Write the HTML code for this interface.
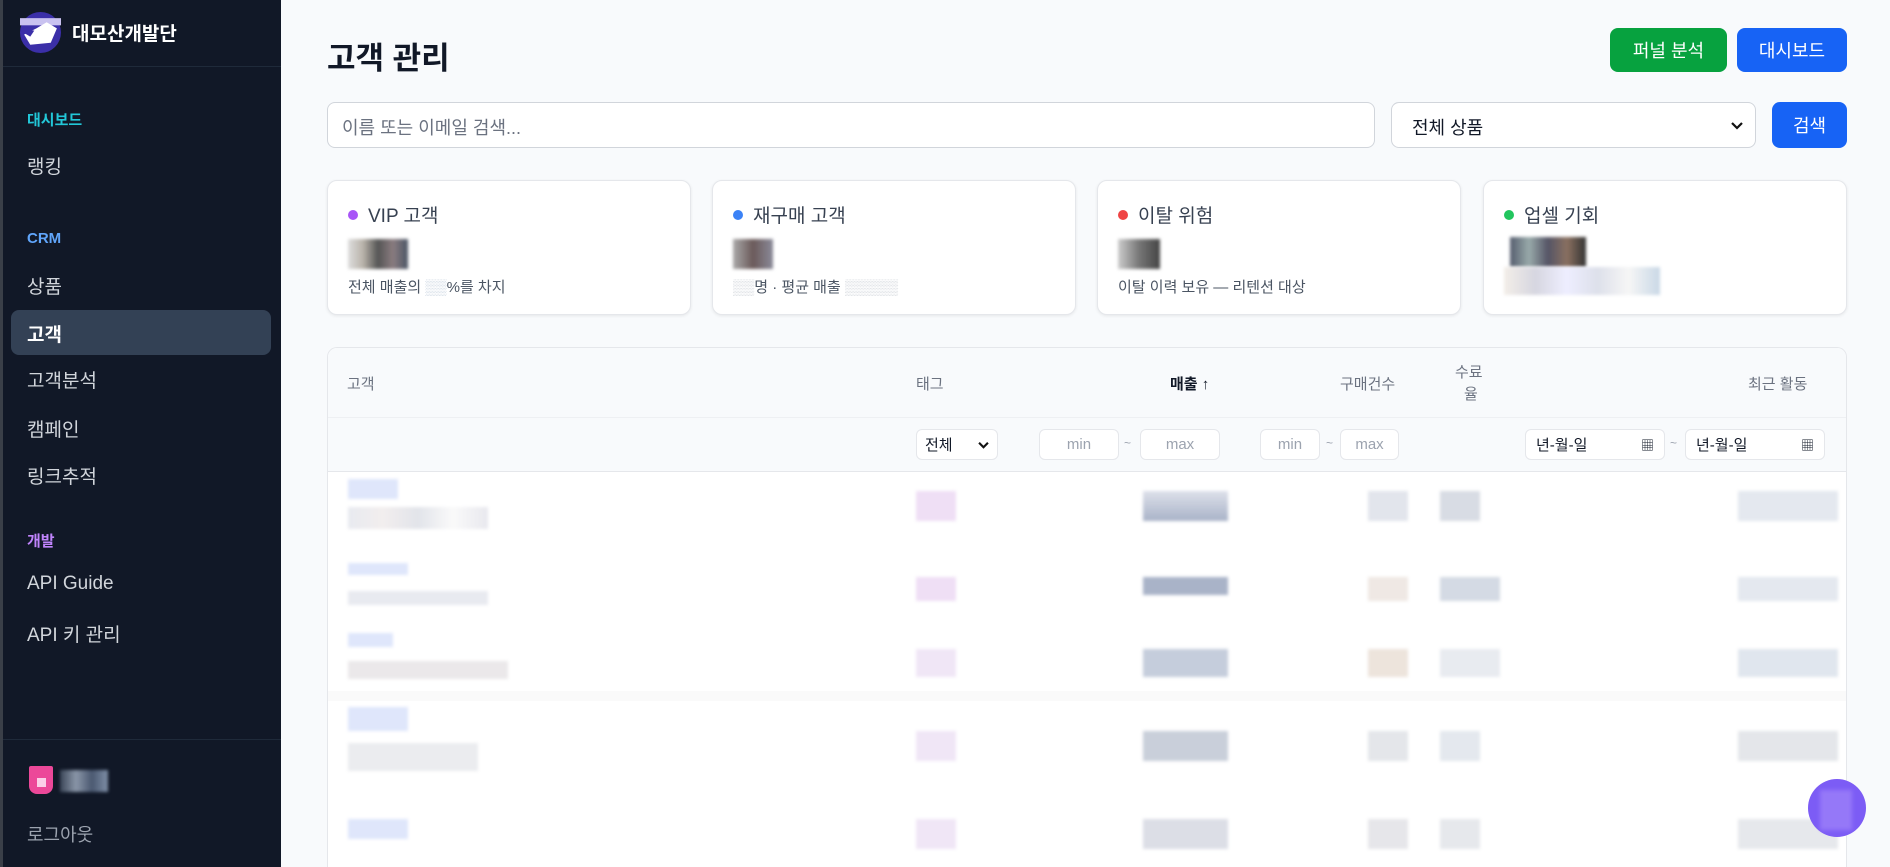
<!DOCTYPE html>
<html style="width:1890px;height:867px;overflow:hidden"><head><meta charset="utf-8"><style>
*{box-sizing:border-box;margin:0;padding:0}
body{width:1890px;height:867px;overflow:hidden;background:#f8fafc;font-family:"Liberation Sans","Noto Sans CJK KR",sans-serif;position:relative}
.a{position:absolute}
.sb{left:0;top:0;width:281px;height:867px;background:#111827;border-left:3px solid #3a3f48}
.nav{left:27px;font-size:19px;color:#d1d5db}
.sec{left:27px;font-size:15px;font-weight:bold}
.btn{color:#fff;font-size:18px;border-radius:8px;display:flex;align-items:center;justify-content:center}
.card{background:#fff;border:1px solid #e5e7eb;border-radius:10px;box-shadow:0 1px 3px rgba(0,0,0,.08);width:364px;height:135px;top:180px}
.card .t{position:absolute;left:20px;top:20px;font-size:19px;color:#374151;display:flex;align-items:center}
.card .t i{display:inline-block;width:10px;height:10px;border-radius:50%;margin-right:10px}
.card .s{position:absolute;left:20px;top:95px;font-size:15px;color:#4b5563}
.bl{position:absolute;filter:blur(1.5px)}
.th{font-size:15px;color:#6b7280;top:373px}
.in{background:#fff;border:1px solid #e5e7eb;border-radius:6px;font-size:15px;color:#9ca3af;display:flex;align-items:center;justify-content:center;height:31px;top:429px}
</style></head><body>
<div class="a sb"></div>
<svg class="a" style="left:20px;top:12px" width="41" height="41" viewBox="0 0 40 40"><circle cx="20" cy="20" r="20" fill="#3b2fa8"/><rect x="0" y="6" width="40" height="7" fill="#c9c2f0"/><path d="M4 22 L16 16 L26 10 L36 16 L30 30 L10 32 Z" fill="#fff"/><path d="M0 18 L14 18 L10 24 Z" fill="#3b2fa8"/></svg>
<div class="a" style="left:72px;top:19px;font-size:19px;font-weight:bold;color:#fff">대모산개발단</div>
<div class="a" style="left:3px;top:66px;width:278px;height:1px;background:#1f2a3a"></div>
<div class="a sec" style="top:109px;color:#22c7d8">대시보드</div>
<div class="a nav" style="top:152px">랭킹</div>
<div class="a sec" style="top:230px;color:#60a5fa">CRM</div>
<div class="a nav" style="top:272px">상품</div>
<div class="a" style="left:11px;top:310px;width:260px;height:45px;background:#334155;border-radius:8px"></div>
<div class="a nav" style="top:320px;color:#fff;font-weight:bold">고객</div>
<div class="a nav" style="top:366px">고객분석</div>
<div class="a nav" style="top:415px">캠페인</div>
<div class="a nav" style="top:462px">링크추적</div>
<div class="a sec" style="top:530px;color:#c084fc">개발</div>
<div class="a nav" style="top:573px">API Guide</div>
<div class="a nav" style="top:620px">API 키 관리</div>
<div class="a" style="left:3px;top:739px;width:278px;height:1px;background:#1f2a3a"></div>
<div class="a" style="left:29px;top:766px;width:24px;height:28px;background:#ec4899;border-radius:2px 2px 8px 8px"></div>
<div class="a" style="left:37px;top:778px;width:9px;height:9px;background:#fbcfe8"></div>
<div class="a bl" style="left:60px;top:770px;width:48px;height:22px;background:linear-gradient(90deg,#3b4658,#8a96a8,#4a5870,#8090a8)"></div>
<div class="a" style="left:27px;top:821px;font-size:18px;color:#9ca3af">로그아웃</div>

<div class="a" style="left:327px;top:33px;font-size:31px;font-weight:bold;color:#111827">고객 관리</div>
<div class="a btn" style="left:1610px;top:28px;width:117px;height:44px;background:#07a23f">퍼널 분석</div>
<div class="a btn" style="left:1737px;top:28px;width:110px;height:44px;background:#1763f5">대시보드</div>
<div class="a" style="left:327px;top:102px;width:1048px;height:46px;background:#fff;border:1px solid #d1d5db;border-radius:8px;font-size:18px;color:#6b7280;padding:11px 14px">이름 또는 이메일 검색...</div>
<div class="a" style="left:1391px;top:102px;width:365px;height:46px;background:#fff;border:1px solid #d1d5db;border-radius:8px;font-size:18px;color:#111827;padding:11px 20px">전체 상품<svg style="position:absolute;right:12px;top:18px" width="12" height="9" viewBox="0 0 12 9"><path d="M1 2 L6 7 L11 2" stroke="#111" stroke-width="2.2" fill="none"/></svg></div>
<div class="a btn" style="left:1772px;top:102px;width:75px;height:46px;background:#1763f5">검색</div>

<div class="a card" style="left:327px"><div class="t"><i style="background:#a855f7"></i>VIP 고객</div><div class="bl" style="left:20px;top:58px;width:60px;height:30px;background:linear-gradient(90deg,#ddd,#b9b3aa,#555,#8a7c80,#4a5565)"></div><div class="s">전체 매출의 <span style="color:#cbd5e1">▒▒</span>%를 차지</div></div>
<div class="a card" style="left:712px"><div class="t"><i style="background:#3b82f6"></i>재구매 고객</div><div class="bl" style="left:20px;top:58px;width:40px;height:30px;background:linear-gradient(90deg,#aaa,#6b5a5a,#8a8a99)"></div><div class="s"><span style="color:#d1d5db">▒▒</span>명 · 평균 매출 <span style="color:#d1d5db">▒▒▒▒▒</span></div></div>
<div class="a card" style="left:1097px"><div class="t"><i style="background:#ef4444"></i>이탈 위험</div><div class="bl" style="left:20px;top:58px;width:42px;height:30px;background:linear-gradient(90deg,#ccc,#777,#444)"></div><div class="s">이탈 이력 보유 — 리텐션 대상</div></div>
<div class="a card" style="left:1483px"><div class="t"><i style="background:#22c55e"></i>업셀 기회</div><div class="bl" style="left:26px;top:56px;width:76px;height:30px;background:linear-gradient(90deg,#555d6e,#9aa,#556,#8a7060,#333)"></div><div class="bl" style="left:20px;top:86px;width:156px;height:28px;background:linear-gradient(90deg,#f3eee8,#d6d6e0,#eef,#dde0ea,#f6f6f6,#c9d8e6)"></div></div>

<div class="a" style="left:327px;top:347px;width:1520px;height:520px;background:#fff;border:1px solid #e5e7eb;border-bottom:none;border-radius:10px 10px 0 0;overflow:hidden">
<div style="height:70px;background:#f8fafc;border-bottom:1px solid #eef0f3"></div>
<div style="height:54px;background:#f8fafc;border-bottom:1px solid #e5e7eb"></div>
</div>
<div class="a th" style="left:347px">고객</div>
<div class="a th" style="left:916px">태그</div>
<div class="a th" style="left:1170px;color:#111827;font-weight:bold">매출 ↑</div>
<div class="a th" style="left:1340px">구매건수</div>
<div class="a" style="left:1455px;top:362px;font-size:15px;color:#6b7280;text-align:center;line-height:22px">수료<br>&nbsp;율</div>
<div class="a th" style="left:1748px">최근 활동</div>
<div class="a in" style="left:916px;width:82px;color:#111827;justify-content:space-between;padding:0 8px">전체<svg width="11" height="8" viewBox="0 0 12 9"><path d="M1 2 L6 7 L11 2" stroke="#111" stroke-width="2.4" fill="none"/></svg></div>
<div class="a in" style="left:1039px;width:80px">min</div>
<div class="a" style="left:1124px;top:436px;font-size:12px;color:#9ca3af">~</div>
<div class="a in" style="left:1140px;width:80px">max</div>
<div class="a in" style="left:1260px;width:60px">min</div>
<div class="a" style="left:1326px;top:436px;font-size:12px;color:#9ca3af">~</div>
<div class="a in" style="left:1340px;width:59px">max</div>
<div class="a in" style="left:1525px;width:140px;color:#111827;justify-content:space-between;padding:0 10px">년-월-일<span style="font-size:13px">▦</span></div>
<div class="a" style="left:1670px;top:436px;font-size:12px;color:#9ca3af">~</div>
<div class="a in" style="left:1685px;width:140px;color:#111827;justify-content:space-between;padding:0 10px">년-월-일<span style="font-size:13px">▦</span></div>

<div class="a" style="left:328px;top:471px;width:1518px;height:396px;overflow:hidden">
<div class="bl" style="left:20px;top:8px;width:50px;height:20px;background:#dfe6fb"></div>
<div class="bl" style="left:20px;top:36px;width:140px;height:22px;background:linear-gradient(90deg,#e8eaf0,#f2eeee,#e2e4ea,#fafafa,#e8e8ee)"></div>
<div class="bl" style="left:588px;top:20px;width:40px;height:30px;background:#efdff5"></div>
<div class="bl" style="left:815px;top:20px;width:85px;height:30px;background:linear-gradient(180deg,#dde0ea,#a9b3c8)"></div>
<div class="bl" style="left:1040px;top:20px;width:40px;height:30px;background:#e2e5ec"></div>
<div class="bl" style="left:1112px;top:20px;width:40px;height:30px;background:#d8dce4"></div>
<div class="bl" style="left:1410px;top:20px;width:100px;height:30px;background:#e4e8ef"></div>

<div class="bl" style="left:20px;top:92px;width:60px;height:12px;background:#dfe6fb"></div>
<div class="bl" style="left:20px;top:120px;width:140px;height:14px;background:#e8eaf0"></div>
<div class="bl" style="left:588px;top:106px;width:40px;height:24px;background:#efdff5"></div>
<div class="bl" style="left:815px;top:106px;width:85px;height:18px;background:#a9b3c8"></div>
<div class="bl" style="left:1040px;top:106px;width:40px;height:24px;background:#efe8e4"></div>
<div class="bl" style="left:1112px;top:106px;width:60px;height:24px;background:#d4dae4"></div>
<div class="bl" style="left:1410px;top:106px;width:100px;height:24px;background:#e4e8ef"></div>

<div class="bl" style="left:20px;top:162px;width:45px;height:14px;background:#dfe6fb"></div>
<div class="bl" style="left:20px;top:190px;width:160px;height:18px;background:#ebe8ea"></div>
<div class="bl" style="left:588px;top:178px;width:40px;height:28px;background:#f0e6f6"></div>
<div class="bl" style="left:815px;top:178px;width:85px;height:28px;background:#c5cddc"></div>
<div class="bl" style="left:1040px;top:178px;width:40px;height:28px;background:#ede4dc"></div>
<div class="bl" style="left:1112px;top:178px;width:60px;height:28px;background:#e8ebf0"></div>
<div class="bl" style="left:1410px;top:178px;width:100px;height:28px;background:#e0e6ee"></div>

<div class="a" style="left:0;top:220px;width:1518px;height:10px;background:#fafafa"></div>

<div class="bl" style="left:20px;top:236px;width:60px;height:24px;background:#dfe6fb"></div>
<div class="bl" style="left:20px;top:272px;width:130px;height:28px;background:#ebecef"></div>
<div class="bl" style="left:588px;top:260px;width:40px;height:30px;background:#f0e6f6"></div>
<div class="bl" style="left:815px;top:260px;width:85px;height:30px;background:#c9cfda"></div>
<div class="bl" style="left:1040px;top:260px;width:40px;height:30px;background:#e4e6ea"></div>
<div class="bl" style="left:1112px;top:260px;width:40px;height:30px;background:#e4e8ee"></div>
<div class="bl" style="left:1410px;top:260px;width:100px;height:30px;background:#e4e6ea"></div>

<div class="bl" style="left:20px;top:348px;width:60px;height:20px;background:#dfe6fb"></div>
<div class="bl" style="left:588px;top:348px;width:40px;height:30px;background:#f0e6f6"></div>
<div class="bl" style="left:815px;top:348px;width:85px;height:30px;background:#dcdee6"></div>
<div class="bl" style="left:1040px;top:348px;width:40px;height:30px;background:#e6e6ea"></div>
<div class="bl" style="left:1112px;top:348px;width:40px;height:30px;background:#e6e8ec"></div>
<div class="bl" style="left:1410px;top:348px;width:100px;height:30px;background:#e6e8ec"></div>
</div>
<div class="a" style="left:1808px;top:779px;width:58px;height:58px;border-radius:50%;background:#7c5cf5"></div>
<div class="a" style="left:1820px;top:790px;width:32px;height:40px;background:#a78bfa;filter:blur(2px);opacity:.6"></div>
</body></html>
